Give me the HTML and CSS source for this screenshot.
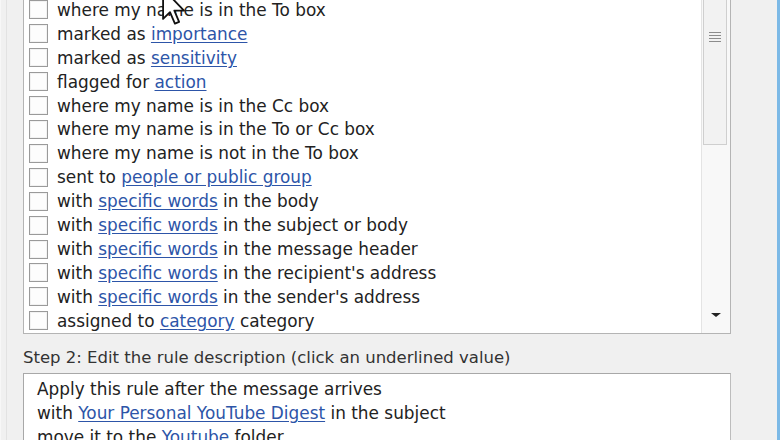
FILE: index.html
```html
<!DOCTYPE html>
<html>
<head>
<meta charset="utf-8">
<link rel="stylesheet" href="styles.css">
</head>
<body>
<div class="window">
  <div class="dialog">
    <div class="listbox">
      <ul class="rows">
        <li class="row"><span class="cb"></span><span>where my name is in the To box</span></li>
        <li class="row"><span class="cb"></span><span>marked as <a class="lnk">importance</a></span></li>
        <li class="row"><span class="cb"></span><span>marked as <a class="lnk">sensitivity</a></span></li>
        <li class="row"><span class="cb"></span><span>flagged for <a class="lnk">action</a></span></li>
        <li class="row"><span class="cb"></span><span>where my name is in the Cc box</span></li>
        <li class="row"><span class="cb"></span><span>where my name is in the To or Cc box</span></li>
        <li class="row"><span class="cb"></span><span>where my name is not in the To box</span></li>
        <li class="row"><span class="cb"></span><span>sent to <a class="lnk">people or public group</a></span></li>
        <li class="row"><span class="cb"></span><span>with <a class="lnk">specific words</a> in the body</span></li>
        <li class="row"><span class="cb"></span><span>with <a class="lnk">specific words</a> in the subject or body</span></li>
        <li class="row"><span class="cb"></span><span>with <a class="lnk">specific words</a> in the message header</span></li>
        <li class="row"><span class="cb"></span><span>with <a class="lnk">specific words</a> in the recipient's address</span></li>
        <li class="row"><span class="cb"></span><span>with <a class="lnk">specific words</a> in the sender's address</span></li>
        <li class="row"><span class="cb"></span><span>assigned to <a class="lnk">category</a> category</span></li>
      </ul>
      <div class="scrollbar">
        <div class="thumb">
          <div class="grip"><i></i><i></i><i></i><i></i></div>
        </div>
        <div class="track"></div>
        <div class="arrow-down"></div>
      </div>
    </div>
    <div class="step-label">Step 2: Edit the rule description (click an underlined value)</div>
    <div class="desc">
      <div class="dline">Apply this rule after the message arrives</div>
      <div class="dline">with <a class="lnk">Your Personal YouTube Digest</a> in the subject</div>
      <div class="dline">move it to the <a class="lnk">Youtube</a> folder</div>
    </div>
  </div>
  <svg class="cursor" width="24" height="40" viewBox="0 0 13 22">
    <path d="M0.5 0.5 L0.5 17 L4.3 13.3 L7 19.6 L9.3 18.6 L6.7 12.4 L12 12.4 Z" fill="#fff" stroke="#111" stroke-width="1" stroke-linejoin="round"/>
  </svg>
</div>
</body>
</html>
```

FILE: styles.css
```css
html, body {
  margin: 0;
  padding: 0;
}
body {
  width: 780px;
  height: 440px;
  overflow: hidden;
  background: #f0f0f0;
  font-family: "DejaVu Sans", "Liberation Sans", sans-serif;
  font-size: 16.9px;
  color: #222;
}
.window {
  position: relative;
  width: 780px;
  height: 440px;
  overflow: hidden;
  border-right: 3px solid #7cb9e6;
  border-left: 1px solid #f7f7f7;
  box-sizing: border-box;
}
.window::before {
  content: "";
  position: absolute;
  left: 5px;
  top: 0;
  bottom: 0;
  width: 1px;
  background: #e2e2e2;
}
.dialog {
  margin-top: -3px;
  padding-left: 22px;
  padding-right: 46px;
}
.listbox {
  display: flex;
  height: 337px;
  box-sizing: border-box;
  border: 1px solid #b4b4b4;
  background: #fff;
}
.rows {
  list-style: none;
  margin: 0;
  padding: 0 0 0 5px;
  flex: 1;
  overflow: hidden;
}
.row {
  height: 23.92px;
  display: flex;
  align-items: center;
  gap: 9px;
  white-space: nowrap;
}
.cb {
  flex: none;
  width: 17px;
  height: 17px;
  border: 1px solid #9a9a9a;
  background: #fdfdfd;
  box-shadow: inset 0 0 0 1px #f2f2f2;
}
.lnk {
  color: #2d55a8;
  text-decoration: underline;
  text-underline-offset: 2px;
}
.scrollbar {
  width: 28px;
  flex: none;
  display: flex;
  flex-direction: column;
  border-left: 1px solid #e4e4e4;
  background: #f8f8f8;
}
.thumb {
  height: 146px;
  margin: 0 3px 0 1px;
  border: 1px solid #cfcfcf;
  border-top: none;
  background: #f2f2f2;
  display: flex;
  justify-content: center;
}
.grip {
  margin-top: 34px;
  display: flex;
  flex-direction: column;
  gap: 2px;
}
.grip i {
  display: block;
  width: 12px;
  height: 1px;
  background: #8c8c8c;
}
.track {
  flex: 1;
}
.arrow-down {
  height: 26px;
  position: relative;
}
.arrow-down::after {
  content: "";
  position: absolute;
  left: 9px;
  top: 6px;
  border-left: 5px solid transparent;
  border-right: 5px solid transparent;
  border-top: 4px solid #222;
}
.step-label {
  margin-top: 14px;
  line-height: 20px;
  height: 20px;
  white-space: nowrap;
  color: #333;
  font-size: 16.5px;
}
.desc {
  margin-top: 5px;
  border: 1px solid #a8a8a8;
  border-right-color: #bdbdbd;
  background: #fff;
  padding: 3px 13px 0 13px;
  height: 200px;
}
.dline {
  height: 24px;
  line-height: 24px;
  white-space: nowrap;
}
.cursor {
  position: absolute;
  left: 161px;
  top: -12px;
}
```
